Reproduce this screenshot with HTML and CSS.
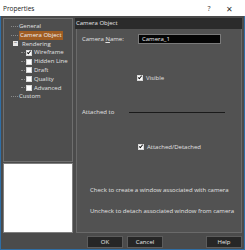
FILE: index.html
```html
<!DOCTYPE html>
<html lang="en">
<head>
  <meta charset="UTF-8">
  <title>Properties</title>
  <link rel="stylesheet" href="styles.css">
</head>
<body>
  <div class="window">
    <div class="titlebar">
      <span class="title">Properties</span>
      <span class="title-btn">?</span>
      <span class="title-btn close">&#x2715;</span>
    </div>

    <div class="dialog">
      <div class="left">
        <ul class="tree">
          <li class="item lvl0"><span class="hline"></span>General</li>
          <li class="item lvl0 selected"><span class="hline"></span><span class="label">Camera Object</span></li>
          <li class="item lvl0"><span class="toggle">&minus;</span>Rendering</li>
          <li class="item lvl1"><span class="hline"></span><span class="check on"></span>Wireframe</li>
          <li class="item lvl1"><span class="hline"></span><span class="check"></span>Hidden Line</li>
          <li class="item lvl1"><span class="hline"></span><span class="check"></span>Draft</li>
          <li class="item lvl1"><span class="hline"></span><span class="check"></span>Quality</li>
          <li class="item lvl1"><span class="hline"></span><span class="check"></span>Advanced</li>
          <li class="item lvl0"><span class="hline"></span>Custom</li>
        </ul>
        <div class="preview"></div>
      </div>

      <div class="right">
        <div class="page-head">Camera Object</div>
        <div class="page">
          <div class="row name-row">
            <label>Camera <u>N</u>ame:</label>
            <div class="textbox">Camera_1</div>
          </div>
          <div class="row check-row visible-row">
            <span class="check on"></span>Visible
          </div>
          <div class="row attach-row">
            <label>Attached to</label>
            <div class="underline"></div>
          </div>
          <div class="row check-row detach-row">
            <span class="check on"></span>Attached/Detached
          </div>
          <p class="note first">Check to create a window associated with camera</p>
          <p class="note">Uncheck to detach associated window from camera</p>
        </div>
      </div>
    </div>

    <div class="buttons">
      <button>OK</button>
      <button>Cancel</button>
      <span class="spacer"></span>
      <button>Help</button>
    </div>
  </div>
</body>
</html>
```

FILE: styles.css
```css
body {
  margin: 0;
  font-family: "Open Sans", "Liberation Sans", sans-serif;
  font-size: 6px;
  color: #e2e2e2;
  background: #ffffff;
}
.window {
  width: 245px;
  height: 250px;
  box-sizing: border-box;
  border: 1px solid #2f6ea5;
  border-top: none;
  background-color: #4b4b4b;
  display: flex;
  flex-direction: column;
}
.titlebar {
  height: 16px;
  background: #ffffff;
  color: #222;
  display: flex;
  align-items: center;
  padding: 0 6px 0 3px;
  font-size: 6.5px;
  margin: 0 -1px;
}
.title {
  flex: 1;
}
.title-btn {
  width: 20px;
  text-align: center;
  font-size: 7px;
  color: #333;
}
.title-btn.close {
  font-size: 8px;
}
.dialog {
  display: flex;
  gap: 2px;
  padding: 2px 2px 0 2px;
  height: 215px;
}
.left {
  width: 70px;
  display: flex;
  flex-direction: column;
}
.tree {
  list-style: none;
  margin: 0;
  padding: 3px 0 0 0;
  height: 144px;
  box-sizing: border-box;
  border: 1px solid #6e6e6e;
  background: #4e4e4e;
}
.item {
  height: 8.8px;
  line-height: 8.8px;
  display: flex;
  align-items: center;
  white-space: nowrap;
}
.lvl0 {
  padding-left: 7px;
}
.lvl1 {
  padding-left: 17px;
}
.hline {
  width: 7px;
  border-top: 1px dotted #8a8a8a;
  margin-right: 1px;
}
.lvl1 .hline {
  width: 4px;
  margin-right: 1px;
}
.toggle {
  width: 5px;
  height: 5px;
  background: #e8e8e8;
  color: #333;
  font-size: 6px;
  line-height: 5px;
  text-align: center;
  margin: 0 4px 0 2px;
}
.selected .label {
  background: #a05d22;
  color: #f0f0f0;
  padding: 0 1px;
}
.check {
  width: 4px;
  height: 4px;
  background: #ffffff;
  border: 1px solid #d8d8d8;
  margin-right: 2px;
  position: relative;
  flex-shrink: 0;
}
.check.on::after {
  content: "";
  position: absolute;
  left: 1px;
  top: -1px;
  width: 1px;
  height: 3px;
  border: solid #111;
  border-width: 0 1px 1px 0;
  transform: rotate(40deg);
}
.preview {
  margin-top: 1px;
  height: 68px;
  background: #ffffff;
  border: 1px solid #808080;
}
.right {
  flex: 1;
  display: flex;
  flex-direction: column;
}
.page-head {
  height: 11px;
  line-height: 11px;
  background: #2b2b2b;
  padding-left: 1px;
  color: #e8e8e8;
}
.page {
  flex: 1;
  margin: 0 0 0 1px;
  border: 1px solid #6a6a6a;
  border-top: none;
  background: #525252;
  padding: 5px 0 0 5px;
}
.row {
  display: flex;
  align-items: center;
}
.name-row label {
  width: 56px;
}
.textbox {
  width: 78px;
  height: 8px;
  line-height: 8px;
  background: #050505;
  border: 1px solid #7a7a7a;
  padding-left: 3px;
  color: #f0f0f0;
}
.check-row .check {
  margin-right: 3px;
}
.visible-row {
  margin: 30px 0 0 55px;
}
.attach-row {
  margin-top: 26px;
}
.attach-row label {
  width: 47px;
}
.underline {
  width: 96px;
  border-top: 1px solid #1a1a1a;
}
.detach-row {
  margin: 27px 0 0 56px;
}
.note {
  margin: 0 0 0 8px;
}
.note.first {
  margin-top: 35px;
  margin-bottom: 13px;
}
.buttons {
  display: flex;
  gap: 4px;
  padding: 3px 2px 0 86px;
}
.spacer {
  flex: 1;
}
button {
  width: 36px;
  height: 12px;
  padding: 0;
  background: #262626;
  color: #e8e8e8;
  border: 1px solid #5c5c5c;
  font-family: "Open Sans", "Liberation Sans", sans-serif;
  font-size: 6px;
}
```
